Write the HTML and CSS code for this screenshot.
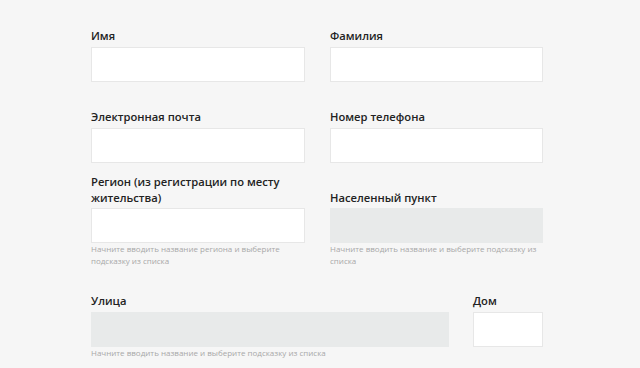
FILE: index.html
```html
<!DOCTYPE html>
<html lang="ru">
<head>
<meta charset="utf-8">
<title>Форма</title>
<link rel="stylesheet" href="styles.css">
</head>
<body>
<form class="form">
  <div class="row row-two row-first">
    <label class="label">Имя</label>
    <input class="input" type="text">
    <div class="hint"></div>
    <label class="label">Фамилия</label>
    <input class="input" type="text">
    <div class="hint"></div>
  </div>
  <div class="row row-two row-second">
    <label class="label">Электронная почта</label>
    <input class="input" type="text">
    <div class="hint"></div>
    <label class="label">Номер телефона</label>
    <input class="input" type="text">
    <div class="hint"></div>
  </div>
  <div class="row row-two row-third">
    <label class="label">Регион (из регистрации по месту жительства)</label>
    <input class="input" type="text">
    <div class="hint">Начните вводить название региона и выберите подсказку из списка</div>
    <label class="label">Населенный пункт</label>
    <input class="input input-disabled" type="text" disabled>
    <div class="hint">Начните вводить название и выберите подсказку из списка</div>
  </div>
  <div class="row row-street">
    <label class="label">Улица</label>
    <input class="input input-disabled" type="text" disabled>
    <div class="hint">Начните вводить название и выберите подсказку из списка</div>
    <label class="label">Дом</label>
    <input class="input" type="text">
    <div class="hint"></div>
  </div>
</form>
</body>
</html>
```

FILE: styles.css
```css
html, body {
  margin: 0;
  padding: 0;
  background: #f6f6f6;
  font-family: "Open Sans", "Noto Sans", sans-serif;
}

.form {
  padding: 28px 0 0 91px;
  width: 452px;
}

.row {
  display: grid;
  grid-auto-flow: column;
  grid-template-rows: auto auto auto;
  column-gap: 25px;
}

.row-two {
  grid-template-columns: 214px 213px;
}

.row-street {
  grid-template-columns: 358px 70px;
  column-gap: 24px;
  margin-top: 26px;
}

.row-second {
  margin-top: 27px;
}

.row-third {
  margin-top: 11px;
}

.label {
  align-self: end;
  display: block;
  font-size: 11.2px;
  font-weight: 600;
  line-height: 16px;
  color: #222;
  margin-bottom: 3px;
}

.row-third .label {
  margin-bottom: 2px;
}

.input {
  box-sizing: border-box;
  display: block;
  width: 100%;
  height: 35px;
  margin: 0;
  border: 1px solid #e7e7e7;
  border-radius: 0;
  background: #fff;
  font: inherit;
  padding: 0 10px;
  outline: none;
}

.input-disabled {
  background: #e8eaea;
  border-color: #e8eaea;
}

.hint {
  margin-top: 0;
  font-size: 8px;
  line-height: 12px;
  color: #a8a8a8;
}
```
